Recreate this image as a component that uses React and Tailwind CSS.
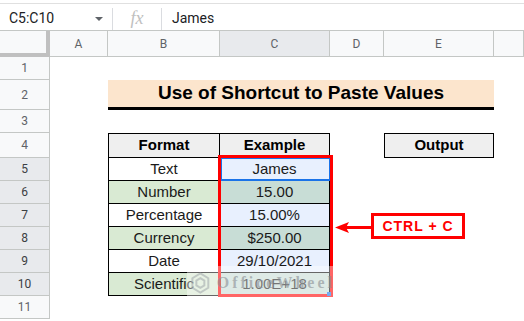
import React from "react";

const rows = [
  { n: 1, h: "h-[23px]" },
  { n: 2, h: "h-[30px]" },
  { n: 3, h: "h-[23px]" },
  { n: 4, h: "h-[25px]" },
  { n: 5, h: "h-[23px]" },
  { n: 6, h: "h-[23px]" },
  { n: 7, h: "h-[23px]" },
  { n: 8, h: "h-[23px]" },
  { n: 9, h: "h-[23px]" },
  { n: 10, h: "h-[23px]" },
  { n: 11, h: "h-[23px]" },
];

const data = [
  ["Text", "James"],
  ["Number", "15.00"],
  ["Percentage", "15.00%"],
  ["Currency", "$250.00"],
  ["Date", "29/10/2021"],
  ["Scientific", "1.00E+18"],
];

function RowHead({ n, h }) {
  const sel = n >= 5 && n <= 10;
  return (
    <div
      className={`${h} flex items-center justify-center border-r border-b border-[#c4c7c5] text-[12px] ${
        sel ? "bg-[#e8eaed] text-[#3c4043]" : "bg-[#f8f9fa] text-[#5f6368]"
      }`}
    >
      {n}
    </div>
  );
}

export default function App() {
  return (
    <div className="relative w-[524px] h-[321px] overflow-hidden bg-white font-['Roboto',sans-serif]">
      {/* formula bar */}
      <div className="h-[30px] mt-[3px] border-t border-[#e0e0e0] flex items-center">
        <div className="w-[113px] h-[22px] flex items-center justify-between border-r border-[#dadce0] pl-[9px] pr-[9px]">
          <span className="text-[14px] text-[#202124]">C5:C10</span>
          <span className="w-0 h-0 border-l-[4px] border-r-[4px] border-t-[4px] border-l-transparent border-r-transparent border-t-[#5f6368]" />
        </div>
        <div className="w-[49px] h-[22px] flex items-center justify-center border-r border-[#dadce0]">
          <span className="text-[18px] italic text-[#c0c0c0] font-['Liberation_Serif',serif]">fx</span>
        </div>
        <span className="ml-[10px] text-[14px] text-[#202124]">James</span>
      </div>

      {/* sheet grid */}
      <div className="grid grid-cols-[50px_58px_112px_110px_54px_110px_30px] border-t border-[#c4c7c5] -mt-[3px]">
        {/* column header */}
        <div className="h-[26px] bg-[#f8f9fa] border-r-[4px] border-b-[4px] border-[#c0c0c0]" />
        {["A", "B", "C", "D", "E", ""].map((c, i) => (
          <div
            key={i}
            className={`h-[26px] flex items-center justify-center border-r border-b border-[#c4c7c5] text-[12px] text-[#5f6368] ${
              c === "C" ? "bg-[#e8eaed]" : "bg-[#f8f9fa]"
            }`}
          >
            {c}
          </div>
        ))}

        {rows.map((r) => {
          const i = r.n - 5;
          const cells = [];
          cells.push(<RowHead key={`h${r.n}`} {...r} />);
          cells.push(<div key={`a${r.n}`} className={r.h} />);
          if (r.n === 2) {
            cells.push(
              <div
                key="title"
                className="col-span-4 h-[30px] bg-[#fce5cd] border-b-[3px] border-black flex items-center justify-center text-[19px] font-bold text-black font-['Liberation_Sans',Arial,sans-serif]"
              >
                Use of Shortcut to Paste Values
              </div>
            );
          } else if (r.n === 4) {
            cells.push(
              <div key="b4" className="h-[25px] bg-[#efefef] border border-black flex items-center justify-center text-[15px] font-bold font-['Liberation_Sans',Arial,sans-serif]">
                Format
              </div>,
              <div key="c4" className="h-[25px] bg-[#efefef] border border-l-0 border-black flex items-center justify-center text-[15px] font-bold font-['Liberation_Sans',Arial,sans-serif]">
                Example
              </div>,
              <div key="d4" className="h-[25px]" />,
              <div key="e4" className="h-[25px] bg-[#efefef] border border-black flex items-center justify-center text-[15px] font-bold font-['Liberation_Sans',Arial,sans-serif]">
                Output
              </div>
            );
          } else if (i >= 0 && i < 6) {
            const green = i % 2 === 1;
            cells.push(
              <div
                key={`b${r.n}`}
                className={`h-[23px] border-l border-r border-b border-black flex items-center justify-center text-[15px] text-[#1a1a1a] font-['Liberation_Sans',Arial,sans-serif] ${
                  green ? "bg-[#d9ead3]" : "bg-white"
                }`}
              >
                {data[i][0]}
              </div>,
              <div
                key={`c${r.n}`}
                className={`h-[23px] border-r border-b border-black flex items-center justify-center text-[15px] text-[#1a1a1a] font-['Liberation_Sans',Arial,sans-serif] ${
                  green ? "bg-[#c8ddd6]" : "bg-[#e8f0fe]"
                }`}
              >
                {data[i][1]}
              </div>,
              <div key={`d${r.n}`} />,
              <div key={`e${r.n}`} />
            );
          } else {
            cells.push(
              <div key={`b${r.n}`} className={r.h} />,
              <div key={`c${r.n}`} />,
              <div key={`d${r.n}`} />,
              <div key={`e${r.n}`} />
            );
          }
          cells.push(<div key={`f${r.n}`} />);
          return cells;
        })}
      </div>

      {/* selection on C5 */}
      <div className="absolute left-[220px] top-[157px] w-[111px] h-[24px] border-2 border-[#1a73e8]" />

      {/* red outline around C5:C10 */}
      <div className="absolute left-[218px] top-[155px] w-[115px] h-[142px] border-[3px] border-[#ff0000]" />

      {/* fill handle */}
      <div className="absolute left-[327px] top-[292px] w-[4px] h-[4px] bg-[#1a73e8]" />

      {/* arrow */}
      <div className="absolute left-[335px] top-[222px] flex items-center">
        <svg width="36" height="11" viewBox="0 0 36 11">
          <polygon points="0,5.5 14,0 11,5.5 14,11" fill="#ff0000" />
          <rect x="10" y="4" width="26" height="3" fill="#ff0000" />
        </svg>
      </div>

      {/* ctrl + c label */}
      <div className="absolute left-[371px] top-[213px] w-[94px] h-[26px] border-[3px] border-[#ff0000] bg-white flex items-center justify-center text-[14px] font-bold tracking-[1px] text-[#ff0000] font-['Liberation_Sans',Arial,sans-serif]">
        CTRL + C
      </div>

      {/* watermark */}
      <div className="absolute left-[187px] top-[266px] w-[148px] h-[33px] bg-white/40 flex items-center gap-[6px] pl-[3px]">
        <svg width="26" height="28" viewBox="0 0 26 28" className="opacity-50">
          <path d="M13 2 L23 8 L23 20 L13 26 L3 20 L3 8 Z" fill="none" stroke="#9aa0a6" strokeWidth="2.5" />
          <path d="M13 8 L18 11 L18 17 L13 20 L8 17 L8 11 Z" fill="none" stroke="#9aa0a6" strokeWidth="2.5" />
        </svg>
        <span className="text-[16px] font-bold tracking-[3px] text-[#8a8f94]/60 font-['Liberation_Serif',serif]">
          OfficeWheel
        </span>
      </div>
    </div>
  );
}
